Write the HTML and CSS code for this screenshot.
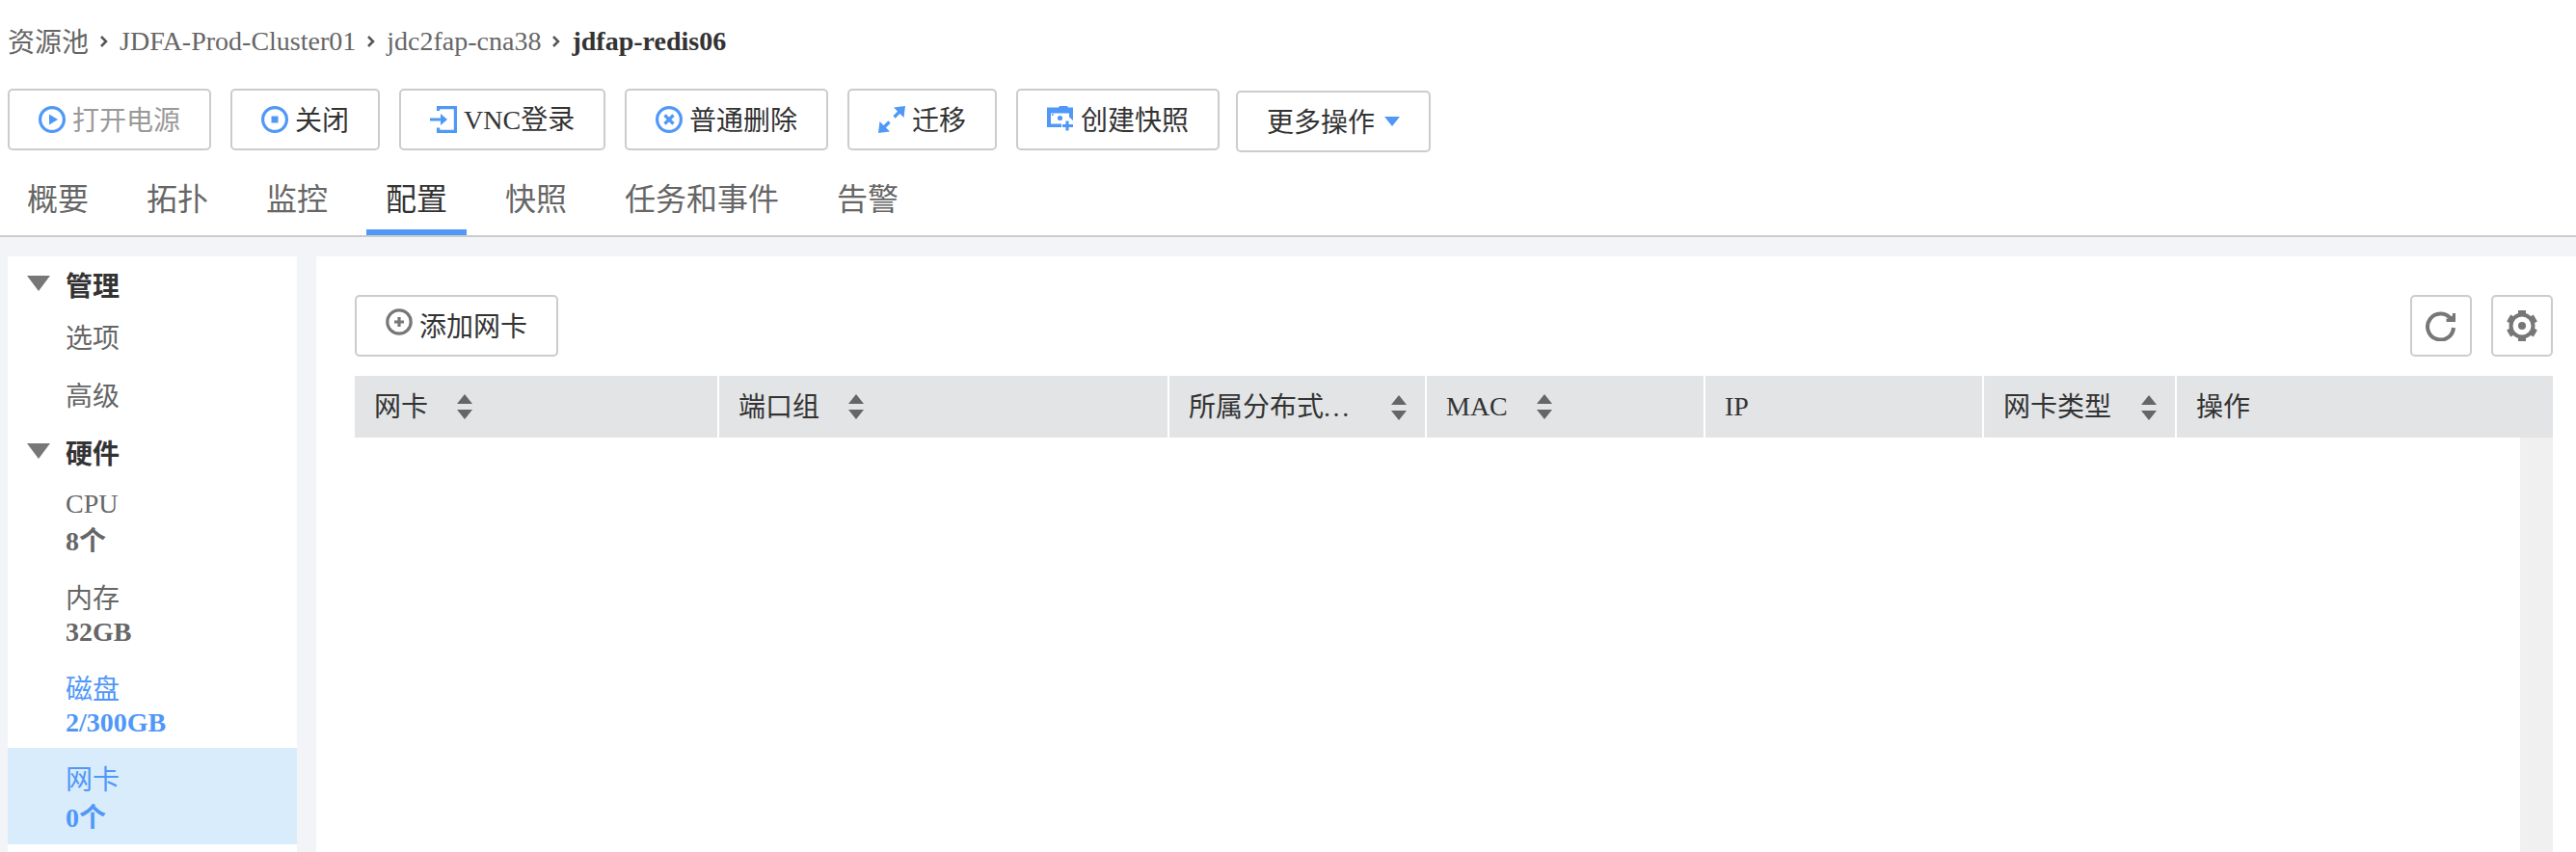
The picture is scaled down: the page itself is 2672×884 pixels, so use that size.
FILE: index.html
```html
<!DOCTYPE html>
<html lang="zh-CN">
<head>
<meta charset="utf-8">
<title>jdfap-redis06</title>
<link rel="stylesheet" href="styles.css">
</head>
<body>
<header class="top">
  <nav class="crumbs">
    <a class="cjk">资源池</a><svg class="chev" viewBox="0 0 8 12"><path d="M1 1l5 5-5 5"/></svg><a>JDFA-Prod-Cluster01</a><svg class="chev" viewBox="0 0 8 12"><path d="M1 1l5 5-5 5"/></svg><a>jdc2fap-cna38</a><svg class="chev" viewBox="0 0 8 12"><path d="M1 1l5 5-5 5"/></svg><b>jdfap-redis06</b>
  </nav>
  <div class="actions">
    <button class="btn w-power off"><svg class="ic" viewBox="0 0 28 28"><circle cx="14" cy="14" r="12.4"/><path class="f" d="M11 8.500l9 5.500-9 5.500z"/></svg><span>打开电源</span></button>
    <button class="btn w-close"><svg class="ic" viewBox="0 0 28 28"><circle cx="14" cy="14" r="12.4"/><path class="f" d="M10.500 10.500h7v7h-7z"/></svg><span>关闭</span></button>
    <button class="btn w-vnc"><svg class="ic" viewBox="0 0 28 28"><path d="M8.600 5V1.600H26.400V26.400H8.600V22.500M0 14H13"/><path class="f" d="M11 8l7 6-7 6z"/></svg><span><span class="latin">VNC</span>登录</span></button>
    <button class="btn w-del"><svg class="ic" viewBox="0 0 28 28"><circle cx="14" cy="14" r="12.4"/><path d="M9.500 9.500l9 9M18.500 9.500l-9 9"/></svg><span>普通删除</span></button>
    <button class="btn w-move"><svg class="ic" viewBox="0 0 28 28"><path d="M16.500 11.500l6-6M11.500 16.500l-6 6"/><path class="f" d="M16 1.500L28 0l-1.500 12zM1.500 16L12 26.500 0 28z"/></svg><span>迁移</span></button>
    <button class="btn w-snap"><svg class="ic" viewBox="0 0 28 28"><path class="f" fill-rule="evenodd" d="M0 1.500h12L13 0h8l1 1.500h5V15l-4-3.500V7.500H4V18.500h11V22H0z"/><path d="M21 15.500v10M16 20.500h11"/><circle class="f" cx="13.500" cy="12.500" r="2.600"/><circle class="f" cx="5.800" cy="9" r="1"/></svg><span>创建快照</span></button>
    <button class="btn w-more"><span>更多操作</span><i class="caret"></i></button>
  </div>
  <nav class="tabs">
    <a>概要</a><a>拓扑</a><a>监控</a><a class="on">配置</a><a>快照</a><a>任务和事件</a><a>告警</a>
  </nav>
</header>
<main class="work">
  <aside class="side">
    <h3 class="group"><i class="tri"></i>管理</h3>
    <a class="line">选项</a>
    <a class="line high">高级</a>
    <h3 class="group"><i class="tri"></i>硬件</h3>
    <a class="item cpu">CPU<b>8个</b></a>
    <a class="item mem">内存<b>32GB</b></a>
    <a class="item disk">磁盘<b>2/300GB</b></a>
    <a class="item nic">网卡<b>0个</b></a>
  </aside>
  <section class="panel">
    <div class="bar">
      <button class="btn add"><svg class="ic" viewBox="0 0 28 28"><circle cx="14" cy="14" r="12.200"/><path d="M14 9v10M9 14h10"/></svg><span>添加网卡</span></button>
      <div class="tools">
        <button class="sq"><svg viewBox="0 0 32 32"><path d="M26 8.500A13.500 13.500 0 1 0 29 18"/><path class="f" d="M31 3v9h-9.500V8.500h3L28 5V3z"/></svg></button>
        <button class="sq"><svg viewBox="0 0 32 32"><circle cx="16" cy="16" r="11.500"/><g class="f"><path id="cog" d="M12 0h8v5h-8z"/><use href="#cog" transform="rotate(60 16 16)"/><use href="#cog" transform="rotate(120 16 16)"/><use href="#cog" transform="rotate(180 16 16)"/><use href="#cog" transform="rotate(240 16 16)"/><use href="#cog" transform="rotate(300 16 16)"/><circle cx="16" cy="16" r="4"/></g></svg></button>
      </div>
    </div>
    <div class="thead">
      <div><span class="t">网卡</span><svg class="sort" viewBox="0 0 16 26"><path d="M0 10L8 0l8 10zM0 16l8 10 8-10z"/></svg></div>
      <div><span class="t">端口组</span><svg class="sort" viewBox="0 0 16 26"><path d="M0 10L8 0l8 10zM0 16l8 10 8-10z"/></svg></div>
      <div class="wide"><span class="t">所属分布式<span class="dots">...</span></span><svg class="sort low" viewBox="0 0 16 26"><path d="M0 10L8 0l8 10zM0 16l8 10 8-10z"/></svg></div>
      <div>MAC<svg class="sort" viewBox="0 0 16 26"><path d="M0 10L8 0l8 10zM0 16l8 10 8-10z"/></svg></div>
      <div>IP</div>
      <div class="wide"><span class="t">网卡类型</span><svg class="sort low" viewBox="0 0 16 26"><path d="M0 10L8 0l8 10zM0 16l8 10 8-10z"/></svg></div>
      <div><span class="t">操作</span></div>
    </div>
    <div class="tbody"><div class="scroll"></div></div>
  </section>
</main>
</body>
</html>
```
FILE: styles.css
```css
* { box-sizing: border-box; }
html, body { height: 100%; margin: 0; overflow: hidden; }
body {
  display: flex;
  flex-direction: column;
  background: #f3f4f7;
  color: #333;
  font: 28px/36px "Liberation Serif", "Noto Sans CJK SC", serif;
}
.top {
  display: flex;
  flex-direction: column;
  height: 246px;
  background: #fff;
  border-bottom: 2px solid #ccc;
}
.crumbs {
  display: flex;
  align-items: center;
  height: 92px;
  padding: 0 0 6px 8px;
  color: #666;
  white-space: nowrap;
}
.crumbs b { color: #333; }
.cjk { padding-top: 3px; }
.chev { width: 8px; height: 12px; margin: 0 12px; fill: none; stroke: #555; stroke-width: 2.5; }
.actions { display: flex; gap: 20px; height: 86px; padding-left: 8px; }
.btn {
  display: flex;
  align-items: center;
  height: 64px;
  padding: 0 0 0 30px;
  background: #fff;
  border: 2px solid #ccc;
  border-radius: 5px;
  color: #333;
  font: inherit;
  white-space: nowrap;
}
.btn > span { padding-top: 3px; }
.latin { display: inline-block; margin-bottom: 1px; }
.ic { flex: none; width: 28px; height: 28px; margin-right: 7px; fill: none; stroke: #5098f8; stroke-width: 3.2; overflow: visible; }
.ic .f { fill: #5098f8; stroke: none; }
.off { color: #999; }
.w-power, .w-del, .w-snap, .add { width: 211px; }
.w-close, .w-move { width: 155px; }
.w-vnc { width: 214px; }
.w-more { width: 202px; margin: 2px 0 0 -3px; }
.caret { margin-left: 10px; border: 8px solid transparent; border-top: 10px solid #5098f8; border-bottom: 0; }
.tabs { display: flex; height: 66px; padding-left: 8px; font-size: 32px; color: #666; }
.tabs a { height: 66px; padding: 11px 20px 0; margin-right: 20px; }
.tabs .on { color: #333; border-bottom: 6px solid #5098f8; }
.work { display: flex; flex: 1; gap: 20px; padding: 20px 0 0 8px; min-height: 0; }
.side { width: 300px; background: #fff; color: #666; }
.side b { display: block; }
.group {
  display: flex;
  align-items: center;
  gap: 16px;
  height: 60px;
  margin: 0;
  padding: 3px 0 0 20px;
  font-size: 28px;
  color: #333;
}
.tri { margin-bottom: 7px; border: 12px solid transparent; border-top: 16px solid #777; border-bottom: 0; }
.line { display: block; height: 60px; padding: 8px 0 0 60px; }
.line.high { height: 54px; }
.item { display: block; padding-left: 60px; }
.cpu { height: 100px; padding-top: 3px; line-height: 39px; }
.mem { height: 94px; padding-top: 5px; line-height: 34px; }
.disk { height: 82px; padding-top: 5px; line-height: 34px; color: #5098f8; }
.nic { height: 100px; padding-top: 14px; line-height: 39px; background: #d9ecfb; color: #5098f8; }
.panel { display: flex; flex: 1; flex-direction: column; padding: 40px 24px 0 40px; background: #fff; }
.bar { display: flex; justify-content: space-between; height: 84px; }
.add .ic { stroke: #777; margin-bottom: 8px; }
.tools { display: flex; gap: 20px; }
.sq { display: flex; align-items: center; justify-content: center; width: 64px; height: 64px; padding: 0; background: #fff; border: 2px solid #ccc; border-radius: 5px; }
.sq svg { width: 32px; height: 32px; fill: none; stroke: #777; stroke-width: 4; }
.sq .f { fill: #777; stroke: none; }
.thead { display: grid; grid-template-columns: 378px 467px 267px 289px 289px 200px 1fr; height: 64px; background: #e2e4e6; }
.thead div { display: flex; align-items: center; padding: 0 20px 1px; border-right: 2px solid #fff; white-space: nowrap; }
.thead div:last-child { border-right: 0; }
.t { padding-top: 3px; }
.sort { flex: none; width: 16px; height: 26px; margin-left: 30px; fill: #666; }
.thead .wide { justify-content: space-between; padding-right: 19px; }
.low { margin-top: 2px; }
.dots { letter-spacing: 2.6px; }
.tbody { display: flex; flex: 1; justify-content: flex-end; }
.scroll { width: 34px; background: #f0f0f0; }
```
